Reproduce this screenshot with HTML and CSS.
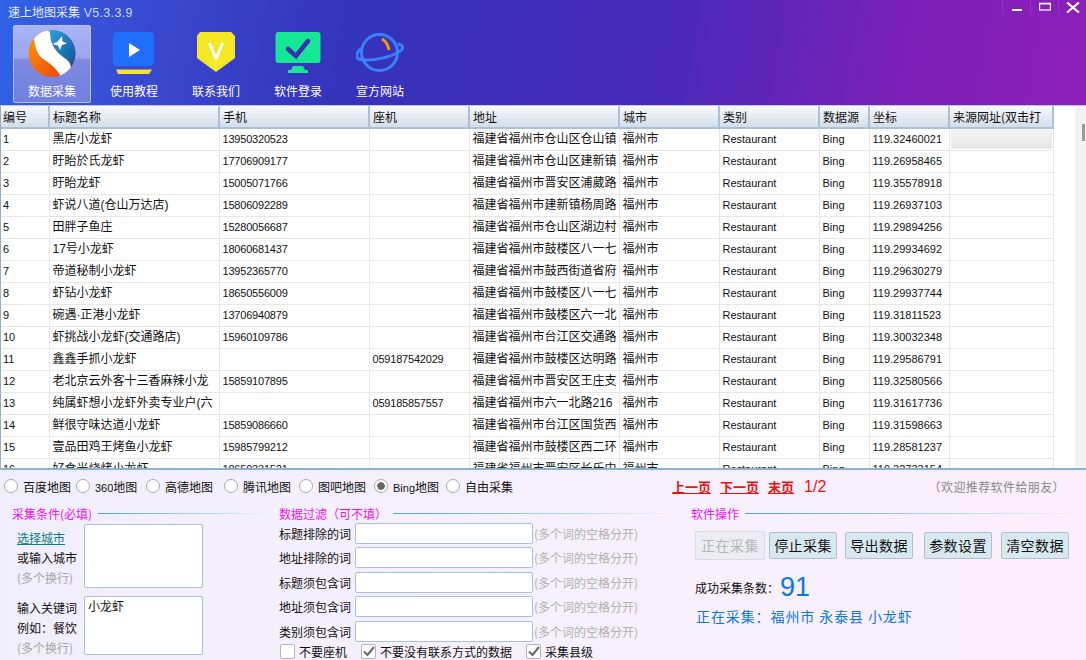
FILE: index.html
```html
<!DOCTYPE html>
<html lang="zh">
<head>
<meta charset="utf-8">
<title>速上地图采集</title>
<link rel="stylesheet" href="styles.css">
</head>
<body>
<div class="app">
  <header class="top">
    <div class="title">速上地图采集&nbsp;<span class="ver">V5.3.3.9</span></div>
    <div class="winbtns">
      <span class="wb"><svg width="12" height="12" viewBox="0 0 12 12"><rect x="1" y="8" width="10" height="2" fill="#fff"/></svg></span>
      <span class="wb"><svg width="12" height="10" viewBox="0 0 12 10"><rect x="0.600" y="1.500" width="10.800" height="6.500" fill="none" stroke="#fff" stroke-width="1.200"/><rect x="0" y="0.800" width="12" height="1.600" fill="#fff"/></svg></span>
      <span class="wb"><svg width="14" height="11" viewBox="0 0 14 11"><path d="M1 0.500 L13 10.500 M13 0.500 L1 10.500" stroke="#fff" stroke-width="2.200"/></svg></span>
    </div>
    <nav class="tools">
      <a class="tool active">
        <svg width="48" height="50" viewBox="0 0 48 50"><defs><linearGradient id="o" x1="0" y1="0" x2="1" y2="1"><stop offset="0" stop-color="#ff9a05"/><stop offset="1" stop-color="#e83a10"/></linearGradient><linearGradient id="b" x1="0" y1="0" x2="1" y2="1"><stop offset="0" stop-color="#25a5e0"/><stop offset="1" stop-color="#123f88"/></linearGradient><clipPath id="c"><circle cx="24" cy="24.500" r="23.500"/></clipPath></defs><g clip-path="url(#c)"><rect width="48" height="50" fill="url(#o)"/><path d="M22 3 C22 19 31 25 39 31 C44 35 44 42 41 47 L52 47 L52 0 L22 0 Z" fill="url(#b)"/><path d="M6 9 C7 18 9 25 14 29 C21 34 29 39 33 48 L40 47 C44 42 44 35 39 31 C31 25 22 19 22 3 L16 0 Z" fill="#fff"/></g><path d="M34 7 L34.500 12.500 L39 14.500 L34 16 L32 21 L30 16.500 L24.500 15 L29.500 12.800 Z" fill="#fff"/></svg>
        <span>数据采集</span>
      </a>
      <a class="tool">
        <svg width="42" height="44" viewBox="0 0 42 44"><rect x="0" y="0" width="41" height="34" rx="4" fill="#1f6ffb"/><path d="M16 11 L27 18 L16 25 Z" fill="#fff"/><path d="M3 37.500 H39 L36 42 H5 Z" fill="#f6e42a"/></svg>
        <span>使用教程</span>
      </a>
      <a class="tool">
        <svg width="40" height="44" viewBox="0 0 40 44"><path d="M4 0 H35 L39 4 V26 L20 40 L1 26 V4 Z" fill="#f5e827"/><path d="M13.500 11 L19.500 26 H20.500 L26.500 11" fill="none" stroke="#fff" stroke-width="3"/></svg>
        <span>联系我们</span>
      </a>
      <a class="tool">
        <svg width="46" height="44" viewBox="0 0 46 44"><rect x="0.500" y="0" width="45" height="31" rx="3" fill="#15e795"/><path d="M13 17 L21 24 L33 9" fill="none" stroke="#3a30b8" stroke-width="4.500" stroke-linecap="round"/><path d="M18 34 H28 L30 38 H33 V41 H13 V38 H16 Z" fill="#15e795"/></svg>
        <span>软件登录</span>
      </a>
      <a class="tool">
        <svg width="48" height="44" viewBox="0 0 48 44"><circle cx="23.500" cy="20.500" r="18" fill="none" stroke="#3a80fb" stroke-width="3"/><path d="M6 16 C0 20 -1 26 3 27 C12 30 32 26 43 20 C48 17 48 13 42 12" fill="none" stroke="#3a80fb" stroke-width="3"/><path d="M26 7 C30 9 32 13 33 18" fill="none" stroke="#ff9500" stroke-width="3"/></svg>
        <span>宣方网站</span>
      </a>
    </nav>
  </header>

  <section class="gridwrap">
    <div class="grid">
      <table>
        <colgroup><col class="c1"><col class="c2"><col class="c3"><col class="c4"><col class="c5"><col class="c6"><col class="c7"><col class="c8"><col class="c9"><col class="c10"></colgroup>
        <thead><tr><th>编号</th><th>标题名称</th><th>手机</th><th>座机</th><th>地址</th><th>城市</th><th>类别</th><th>数据源</th><th>坐标</th><th>来源网址(双击打</th></tr></thead>
        <tbody>
          <tr><td>1</td><td>黑店小龙虾</td><td>13950320523</td><td></td><td>福建省福州市仓山区仓山镇</td><td>福州市</td><td>Restaurant</td><td>Bing</td><td>119.32460021</td><td class="cellbtn"><span></span></td></tr>
          <tr><td>2</td><td>盱眙於氏龙虾</td><td>17706909177</td><td></td><td>福建省福州市仓山区建新镇</td><td>福州市</td><td>Restaurant</td><td>Bing</td><td>119.26958465</td><td></td></tr>
          <tr><td>3</td><td>盱眙龙虾</td><td>15005071766</td><td></td><td>福建省福州市晋安区浦葳路</td><td>福州市</td><td>Restaurant</td><td>Bing</td><td>119.35578918</td><td></td></tr>
          <tr><td>4</td><td>虾说八道(仓山万达店)</td><td>15806092289</td><td></td><td>福建省福州市建新镇杨周路</td><td>福州市</td><td>Restaurant</td><td>Bing</td><td>119.26937103</td><td></td></tr>
          <tr><td>5</td><td>田胖子鱼庄</td><td>15280056687</td><td></td><td>福建省福州市仓山区湖边村</td><td>福州市</td><td>Restaurant</td><td>Bing</td><td>119.29894256</td><td></td></tr>
          <tr><td>6</td><td>17号小龙虾</td><td>18060681437</td><td></td><td>福建省福州市鼓楼区八一七</td><td>福州市</td><td>Restaurant</td><td>Bing</td><td>119.29934692</td><td></td></tr>
          <tr><td>7</td><td>帝道秘制小龙虾</td><td>13952365770</td><td></td><td>福建省福州市鼓西街道省府</td><td>福州市</td><td>Restaurant</td><td>Bing</td><td>119.29630279</td><td></td></tr>
          <tr><td>8</td><td>虾钻小龙虾</td><td>18650556009</td><td></td><td>福建省福州市鼓楼区八一七</td><td>福州市</td><td>Restaurant</td><td>Bing</td><td>119.29937744</td><td></td></tr>
          <tr><td>9</td><td>碗遇·正港小龙虾</td><td>13706940879</td><td></td><td>福建省福州市鼓楼区六一北</td><td>福州市</td><td>Restaurant</td><td>Bing</td><td>119.31811523</td><td></td></tr>
          <tr><td>10</td><td>虾挑战小龙虾(交通路店)</td><td>15960109786</td><td></td><td>福建省福州市台江区交通路</td><td>福州市</td><td>Restaurant</td><td>Bing</td><td>119.30032348</td><td></td></tr>
          <tr><td>11</td><td>鑫鑫手抓小龙虾</td><td></td><td>059187542029</td><td>福建省福州市鼓楼区达明路</td><td>福州市</td><td>Restaurant</td><td>Bing</td><td>119.29586791</td><td></td></tr>
          <tr><td>12</td><td>老北京云外客十三香麻辣小龙</td><td>15859107895</td><td></td><td>福建省福州市晋安区王庄支</td><td>福州市</td><td>Restaurant</td><td>Bing</td><td>119.32580566</td><td></td></tr>
          <tr><td>13</td><td>纯属虾想小龙虾外卖专业户(六</td><td></td><td>059185857557</td><td>福建省福州市六一北路216</td><td>福州市</td><td>Restaurant</td><td>Bing</td><td>119.31617736</td><td></td></tr>
          <tr><td>14</td><td>鲜很守味达道小龙虾</td><td>15859086660</td><td></td><td>福建省福州市台江区国货西</td><td>福州市</td><td>Restaurant</td><td>Bing</td><td>119.31598663</td><td></td></tr>
          <tr><td>15</td><td>壹品田鸡王烤鱼小龙虾</td><td>15985799212</td><td></td><td>福建省福州市鼓楼区西二环</td><td>福州市</td><td>Restaurant</td><td>Bing</td><td>119.28581237</td><td></td></tr>
          <tr><td>16</td><td>好食光烧烤小龙虾</td><td>18650331521</td><td></td><td>福建省福州市晋安区长乐中</td><td>福州市</td><td>Restaurant</td><td>Bing</td><td>119.32733154</td><td></td></tr>
        </tbody>
      </table>
    </div>
    <div class="scroll"><span class="thumb"></span></div>
  </section>

  <section class="panel">
    <div class="sources">
      <label class="radio"><i></i><span>百度地图</span></label>
      <label class="radio"><i></i><span><b>360</b>地图</span></label>
      <label class="radio"><i></i><span>高德地图</span></label>
      <label class="radio"><i></i><span>腾讯地图</span></label>
      <label class="radio"><i></i><span>图吧地图</span></label>
      <label class="radio on"><i></i><span><b>Bing</b>地图</span></label>
      <label class="radio"><i></i><span>自由采集</span></label>
      <div class="pager"><a>上一页</a><a>下一页</a><a>末页</a><span>1/2</span></div>
      <div class="recommend">（欢迎推荐软件给朋友）</div>
    </div>
    <div class="cols">
      <div class="col-a">
        <h3 class="sec"><span>采集条件(必填)</span></h3>
        <div class="cond">
          <div class="lbls"><a class="link">选择城市</a><p>或输入城市</p><p class="gray">(多个换行)</p></div>
          <div class="ta"></div>
        </div>
        <div class="cond second">
          <div class="lbls"><p>输入关键词</p><p>例如：餐饮</p><p class="gray">(多个换行)</p></div>
          <div class="ta short">小龙虾</div>
        </div>
      </div>
      <div class="col-b">
        <h3 class="sec"><span>数据过滤（可不填）</span></h3>
        <div class="frow"><label>标题排除的词</label><span class="inp"></span><em>(多个词的空格分开)</em></div>
        <div class="frow"><label>地址排除的词</label><span class="inp"></span><em>(多个词的空格分开)</em></div>
        <div class="frow"><label>标题须包含词</label><span class="inp"></span><em>(多个词的空格分开)</em></div>
        <div class="frow"><label>地址须包含词</label><span class="inp"></span><em>(多个词的空格分开)</em></div>
        <div class="frow"><label>类别须包含词</label><span class="inp"></span><em>(多个词的空格分开)</em></div>
        <div class="checks">
          <label class="chk"><i></i>不要座机</label>
          <label class="chk on"><i><svg width="12" height="11" viewBox="0 0 12 11"><path d="M1 5.500 L4.500 9 L11 1" fill="none" stroke="#666" stroke-width="2"/></svg></i>不要没有联系方式的数据</label>
          <label class="chk on"><i><svg width="12" height="11" viewBox="0 0 12 11"><path d="M1 5.500 L4.500 9 L11 1" fill="none" stroke="#666" stroke-width="2"/></svg></i>采集县级</label>
        </div>
      </div>
      <div class="col-c">
        <h3 class="sec"><span>软件操作</span></h3>
        <div class="btns">
          <button class="disabled">正在采集</button>
          <button class="b2">停止采集</button>
          <button class="b3">导出数据</button>
          <button class="b4">参数设置</button>
          <button class="b5">清空数据</button>
        </div>
        <div class="count"><span>成功采集条数：</span><strong>91</strong></div>
        <div class="status">正在采集：福州市 永泰县 小龙虾</div>
      </div>
    </div>
  </section>
</div>
</body>
</html>
```
FILE: styles.css
```css
* { box-sizing: border-box; }
html, body { margin: 0; padding: 0; }
body { width: 1086px; height: 660px; overflow: hidden; background: #fff; font-family: "Noto Sans CJK SC", "Liberation Sans", sans-serif; font-size: 12px; color: #111; }
.app { width: 1086px; height: 660px; display: flex; flex-direction: column; }

.top { position: relative; height: 106px; flex: none; color: #fff; background: linear-gradient(100deg, #2f63e8 0%, #3a48d0 14%, #3433bb 32%, #4a29b8 62%, #7a20b8 82%, #8f1db8 100%); border-bottom: 1px solid #b9c9de; }
.title { height: 25px; padding: 3px 0 0 8px; font-size: 12px; line-height: 18px; color: #e6ecff; }
.ver { font-family: "Liberation Sans", sans-serif; font-size: 12.500px; letter-spacing: 0.300px; color: #ccd6ff; margin-left: 1px; }
.winbtns { position: absolute; top: 0; right: 0; display: flex; }
.wb { width: 28px; height: 14px; display: flex; align-items: center; justify-content: center; border-left: 1px solid rgba(255, 255, 255, 0.1); }
.tools { display: flex; padding-left: 13px; gap: 4px; }
.tool { width: 78px; height: 78px; display: flex; flex-direction: column; align-items: center; justify-content: space-between; padding: 4px 0 2px; font-size: 12px; line-height: 18px; border: 1px solid transparent; }
.tool svg { flex: none; margin-top: 2px; }
.tool.active { background: linear-gradient(180deg, #a8b4f4 0%, #9aa6ee 42%, #7f8ae0 44%, #7080dc 100%); border-color: #b5c0f5; border-radius: 2px; }
.tool.active svg { margin-top: -1px; }

.gridwrap { flex: 1 1 0; min-height: 0; display: flex; background: #fff; border-bottom: 2px solid #8fb0c8; }
.grid { width: 1075px; overflow: hidden; border-left: 1px solid #8fb0c8; }
.scroll { width: 11px; background: #f2f2f2; position: relative; }
.thumb { position: absolute; left: 7px; top: 18px; width: 3px; height: 17px; background: #9a9a9a; }
table { border-collapse: collapse; table-layout: fixed; width: 1052px; }
.c1 { width: 48px; } .c2 { width: 170px; } .c3 { width: 150px; } .c4 { width: 100px; } .c5 { width: 150px; }
.c6 { width: 100px; } .c7 { width: 100px; } .c8 { width: 50px; } .c9 { width: 80px; } .c10 { width: 104px; }
th { height: 22px; padding: 0 0 0 3px; font-weight: 400; font-size: 12px; line-height: 20px; text-align: left; white-space: nowrap; overflow: hidden; background: linear-gradient(180deg, #f6f8fb 0%, #e6ebf2 50%, #d3deea 100%); border-right: 2px solid #a9c0d6; border-bottom: 2px solid #a9c0d6; }
td { height: 22px; padding: 0 0 1px 3px; font-size: 11px; line-height: 20px; white-space: nowrap; overflow: hidden; border-right: 1px solid #e7e7e7; border-bottom: 1px solid #e7e7e7; font-family: "Liberation Sans", "Noto Sans CJK SC", sans-serif; }
th:first-child, td:first-child { padding-left: 2px; }
td:nth-child(2), td:nth-child(5), td:nth-child(6) { font-size: 12px; }
td:nth-child(3), td:nth-child(4) { letter-spacing: -0.200px; }
.cellbtn { padding: 1px; }
.cellbtn span { display: block; height: 19px; background: linear-gradient(180deg, #f4f4f4, #e6e6e6); border: 1px solid #ececec; }

.panel { height: 190px; flex: none; background: linear-gradient(90deg, #f1eefb 0%, #f6f0fc 50%, #fbeefc 100%); }
.sources { display: grid; grid-template-columns: 72px 70px 78px 75px 75px 72px 226px auto 1fr; align-items: center; height: 32px; padding-left: 4px; }
.radio { display: flex; align-items: center; gap: 5px; white-space: nowrap; font-size: 12px; }
.radio b { font-weight: 400; font-size: 11px; font-family: "Liberation Sans", sans-serif; }
.radio i { width: 14px; height: 14px; border-radius: 50%; background: #fff; border: 1px solid #a9a9a9; display: block; }
.radio.on i { background: radial-gradient(circle, #666 0 3.500px, #fff 4px); }
.pager { display: flex; gap: 9px; align-items: baseline; color: #f01010; }
.pager a { text-decoration: underline; font-weight: 700; font-size: 13px; }
.pager span { font-family: "Liberation Sans", sans-serif; font-size: 16px; margin-left: 1px; }
.recommend { justify-self: end; margin-right: 21px; color: #888; font-size: 12px; letter-spacing: 0.400px; white-space: nowrap; }

.cols { display: flex; padding-top: 4px; }
.col-a { width: 275px; padding-left: 12px; }
.col-b { width: 411px; padding-left: 4px; }
.col-c { flex: 1; padding-left: 5px; }
.sec { margin: 0; height: 15px; display: flex; align-items: center; gap: 6px; font-weight: 400; font-size: 12px; color: #f010f0; white-space: nowrap; }
.sec::after { content: ""; flex: 1; height: 1px; background: linear-gradient(90deg, #4aa8d0, rgba(74, 168, 208, 0)); margin-right: 8px; }
.cond { display: flex; margin-top: 3px; height: 66px; }
.cond.second { margin-top: 6px; height: 60px; }
.lbls { width: 72px; padding: 4px 0 0 5px; font-size: 12px; line-height: 20px; }
.second .lbls { padding-top: 2px; }
.lbls p { margin: 0; }
.link { color: #088080; text-decoration: underline; display: block; }
.gray { color: #a5a5a5; }
.ta { width: 119px; height: 64px; background: #fff; border: 1px solid #a9c0d6; border-radius: 2px; padding: 0 3px; line-height: 18px; }
.ta.short { height: 59px; }

.frow { display: flex; align-items: center; height: 24.500px; }
.frow label { width: 73px; text-align: right; padding-right: 1px; white-space: nowrap; }
.inp { width: 178px; height: 21px; margin-left: 3px; background: #fff; border: 1px solid #a9c0d6; border-radius: 2px; }
.frow em { font-style: normal; color: #b0b0b0; margin-left: 1px; white-space: nowrap; }
.checks { display: flex; height: 16px; padding-left: 1px; }
.chk { display: flex; align-items: center; gap: 4px; white-space: nowrap; margin-right: 14px; }
.chk i { width: 15px; height: 15px; display: flex; align-items: center; justify-content: center; background: #fff; border: 1px solid #b5b5b5; border-radius: 2px; }

.btns { display: flex; margin-top: 10px; height: 28px; padding-left: 4px; gap: 4px; align-items: center; }
button { height: 27px; width: 68px; padding: 0; font: inherit; font-size: 14px; letter-spacing: 0.400px; color: #111; background: #d8e8ef; border: 1px solid #b0bfc8; border-radius: 2px; white-space: nowrap; }
button.disabled { width: 70px; height: 29px; color: #b5b5b5; background: #ecedf4; border-color: #d8dae4; }
.b3 { margin-left: 4px; } .b4 { margin-left: 7px; } .b5 { margin-left: 5px; }
.count { display: flex; align-items: center; height: 30px; margin: 13px 0 0 4px; }
.count strong { font-weight: 400; font-size: 27px; color: #0a78e0; font-family: "Liberation Sans", sans-serif; margin-left: 1px; }
.status { margin: 4px 0 0 5px; font-size: 14px; line-height: 20px; color: #0a78e0; letter-spacing: 0.900px; white-space: nowrap; }
```
